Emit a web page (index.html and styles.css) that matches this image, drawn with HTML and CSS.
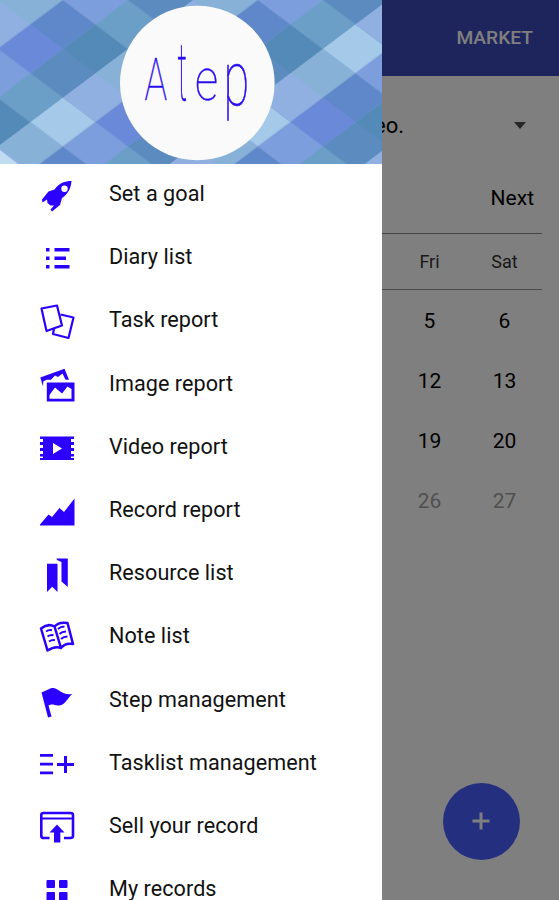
FILE: index.html
```html
<!DOCTYPE html>
<html lang="en">
<head>
	<meta charset="UTF-8">
	<title>Atep</title>
	<link rel="stylesheet" href="styles.css">
</head>
<body>
	<div class="app">
		<div class="topbar">MARKET</div>
		<div class="picker">
			<span>eo.</span>
			<i class="caret"></i>
		</div>
		<div class="month"><span>Next</span></div>
		<div class="calendar">
			<div class="week head"><span>Fri</span><span>Sat</span></div>
			<div class="week"><span>5</span><span>6</span></div>
			<div class="week"><span>12</span><span>13</span></div>
			<div class="week"><span>19</span><span>20</span></div>
			<div class="week off"><span>26</span><span>27</span></div>
		</div>
		<div class="fab">
			<svg width="18" height="18" viewBox="0 0 18 18"><path d="M9 0.5V17.5M0.5 9H17.5" stroke="#fff" stroke-width="3"/></svg>
		</div>
	</div>

	<div class="scrim"></div>

	<div class="drawer">
		<svg class="cover" width="382" height="164" viewBox="0 0 382 164">
			<defs>
				<pattern id="plaid" width="195" height="195" patternUnits="userSpaceOnUse" patternTransform="matrix(.5 .3755 .5 -.3755 -2 0)">
					<rect width="195" height="195" fill="#7d9fd0"/>
					<rect x="0" y="0" width="65" height="65" fill="#88b1d7"/>
					<rect x="0" y="65" width="65" height="65" fill="#a4c9e9"/>
					<rect x="0" y="130" width="65" height="65" fill="#8fb0e0"/>
					<rect x="65" y="0" width="65" height="65" fill="#5f88ca"/>
					<rect x="65" y="65" width="65" height="65" fill="#7d9edc"/>
					<rect x="65" y="130" width="65" height="65" fill="#6a89d9"/>
					<rect x="130" y="0" width="65" height="65" fill="#548ab7"/>
					<rect x="130" y="65" width="65" height="65" fill="#6b9fc8"/>
					<rect x="130" y="130" width="65" height="65" fill="#5b8bbf"/>
				</pattern>
			</defs>
			<rect width="382" height="164" fill="url(#plaid)"/>
			<path d="M0 150L18 164H0z" fill="#bfdcf0"/>
			<circle cx="197.300" cy="83" r="77.300" fill="#fafafa"/>
			<g class="logo">
				<text transform="translate(144.500 100) scale(.62 .96)">A</text>
				<text transform="translate(177.500 100) scale(.5 1.33)">t</text>
				<text transform="translate(195 100) scale(.75 .96)">e</text>
				<text transform="translate(223.500 105) scale(.77 1.25)">p</text>
			</g>
		</svg>
		<ul class="menu">
			<li>
				<svg viewBox="0 -1 40 40"><path fill-rule="evenodd" d="M34.500 5C28 5 22 7 17.500 13.500L11.500 15.500 5 23.500 5.500 26.500 10 23.500 10.500 27 13.500 29.500 17 29.500 13.500 33.500 15 35.500 23 29 25 22C31 18 34 12 34.500 5zM27.500 9.500a3.200 3.200 0 1 1 0 6.400 3.200 3.200 0 0 1 0-6.400z"/></svg>
				<span>Set a goal</span>
			</li>
			<li>
				<svg viewBox="0 0 40 40"><path d="M9 10h3.500v3.500H9zM17.500 10h15v3.500h-15zM9 18.500h3.500V22H9zM17.500 18.500H29V22H17.500zM9 27h3.500v3.500H9zM17.500 27h15v3.500h-15z"/></svg>
				<span>Diary list</span>
			</li>
			<li>
				<svg viewBox="0 0 40 40"><g class="line" stroke-width="2.200" stroke-linejoin="round"><path d="M4.500 7.500L20 4.500 25 24.500 9.500 30z"/><path d="M23.500 13.500L36.500 16.500 31.500 37 16 33 17 28"/></g></svg>
				<span>Task report</span>
			</li>
			<li>
				<svg viewBox="0 0 40 40"><path d="M3.300 12.500L27.500 3.800 32 14.800H28.500L25.500 8.500 21 12 18 10.500 14 14.800H9.500L6.300 16.500 6 21.500z"/><path fill-rule="evenodd" d="M9.800 17.500H37.500V36.500H9.800zM12.500 33.800H34.500V24L30.500 21.500 25 28.500 18 22.500 12.500 30z"/></svg>
				<span>Image report</span>
			</li>
			<li>
				<svg viewBox="0 0 40 40"><path fill-rule="evenodd" d="M3 8.500h34v2.500h-3v3h3v3h-3v3h3v3h-3v3h3v2.500h-3v1.500h3v2H3v-2h3v-1.500H3V26h3v-3H3v-3h3v-3H3v-3h3v-3H3zM16 15v11l9-5.500z"/></svg>
				<span>Video report</span>
			</li>
			<li>
				<svg viewBox="0 0 40 40"><path d="M3 33.500L11.500 23.500 15 26 22.500 17 27 21 37.500 7.500V34.500H3z"/></svg>
				<span>Record report</span>
			</li>
			<li>
				<svg viewBox="0 0 40 40"><path d="M10 9.800H20.500V38L15.200 32.800 10 38zM19.500 4.500H30.800V33L24.500 27.500V8L20 6z"/></svg>
				<span>Resource list</span>
			</li>
			<li>
				<svg viewBox="0 0 40 40"><g class="line" stroke-width="2.500" stroke-linejoin="round"><path d="M4 11.500Q11 6 17.500 9.500 22 4.500 30.500 6L36 27Q28 25.500 24 31 18 28.500 10.500 33.500zM17.500 9.500L24 31"/><path stroke-width="2" d="M9 14.500q3-2 6-1.300M10.500 19.500q3-2 6-1.300M12 24.500q3-2 6-1.300M21 12q2.500-2.500 6.500-2.500M22.500 17q2.500-2.500 6.500-2.500M24 22q2.500-2.500 6.500-2.500"/></g></svg>
				<span>Note list</span>
			</li>
			<li>
				<svg viewBox="0 0 40 40"><path d="M4.500 11.500L14.500 7C22 6 24 15 35.500 13 31 16 28 25 21 24.500 17 24 15 22.500 11.500 24.500L14.500 35.500 11 36.500z"/></svg>
				<span>Step management</span>
			</li>
			<li>
				<svg viewBox="0 0 40 40"><path d="M3 10h13v2.800H3zM3 18.800h13v2.800H3zM3 27.500h13v2.800H3zM27 12h3v7h7v3h-7v7h-3v-7h-7v-3h7z"/></svg>
				<span>Tasklist management</span>
			</li>
			<li>
				<svg viewBox="0 0 40 40"><g class="line" stroke-width="2.600"><path d="M12.500 31H6.500Q4.300 31 4.300 29V8Q4.300 6 6.500 6H33.500Q36 6 36 8V29Q36 31 33.500 31H27"/><path stroke-width="2" d="M4 11.500H36"/></g><path d="M20 17.500L27.500 25.500H23.300V35.500H17V25.500H12.500z"/></svg>
				<span>Sell your record</span>
			</li>
			<li>
				<svg viewBox="0 0 40 40"><rect x="9.500" y="10" width="8.500" height="8" rx="1"/><rect x="22" y="10" width="8.500" height="8" rx="1"/><rect x="9.500" y="22" width="8.500" height="8.500" rx="1"/><rect x="22" y="22" width="8.500" height="8.500" rx="1"/></svg>
				<span>My records</span>
			</li>
		</ul>
	</div>
</body>
</html>
```

FILE: styles.css
```css
*{padding: 0;margin: 0;box-sizing: border-box;}
body{width: 559px;height: 900px;position: relative;overflow: hidden;background: #fff;font-family: Roboto, "Liberation Sans", sans-serif;font-size: 21px;color: #000;}

/* page under the drawer */
.app{height: 900px;background: #fff;}
.topbar{height: 76px;padding-right: 26px;background: #3a4ab8;color: #fff;font-size: 19.200px;font-weight: 500;line-height: 75px;text-align: right;}
.picker{height: 98px;padding: 0 33px 0 374px;display: flex;align-items: center;justify-content: space-between;font-size: 22px;}
.caret{border: 6px solid transparent;border-top: 7px solid #505050;border-bottom: 0;}
.month{height: 59px;padding-right: 25px;display: flex;align-items: center;justify-content: flex-end;font-size: 21px;line-height: 49px;}
.month span{margin-top: -10px;}
.calendar{margin-right: 17px;}
.week{height: 60px;display: grid;grid-template-columns: 75px 75px;justify-content: end;align-items: center;text-align: center;}
.head{height: 57px;margin-bottom: 1px;border-top: 1.500px solid #888;border-bottom: 1.500px solid #999;font-size: 18px;color: #333;}
.off{color: #a0a0a0;}
.fab{position: absolute;left: 443px;top: 783px;width: 77px;height: 77px;border-radius: 50%;background: #4b5fff;display: flex;align-items: center;justify-content: center;}
.fab svg{margin: -2px 0 0 -1px;}

.scrim{position: absolute;left: 0;top: 0;width: 100%;height: 100%;background: rgba(0, 0, 0, 0.5);}

/* drawer */
.drawer{position: absolute;left: 0;top: 0;width: 382px;height: 900px;background: #fff;overflow: hidden;}
.cover{display: block;}
.logo{font-family: Roboto, Lato, sans-serif;font-weight: 100;font-size: 61px;fill: #2a0df0;stroke: #2a0df0;stroke-width: 0.500px;}
.menu{list-style: none;}
.menu li{height: 63.200px;padding-left: 37px;display: flex;align-items: flex-start;}
.menu svg{width: 40px;height: 40px;margin-top: 11px;flex: none;fill: #2b00ff;}
.menu .line{fill: none;stroke: #2b00ff;}
.menu span{margin-left: 32px;margin-top: 16px;line-height: 28px;font-size: 21.600px;letter-spacing: 0.050px;color: #111;white-space: nowrap;}
```
